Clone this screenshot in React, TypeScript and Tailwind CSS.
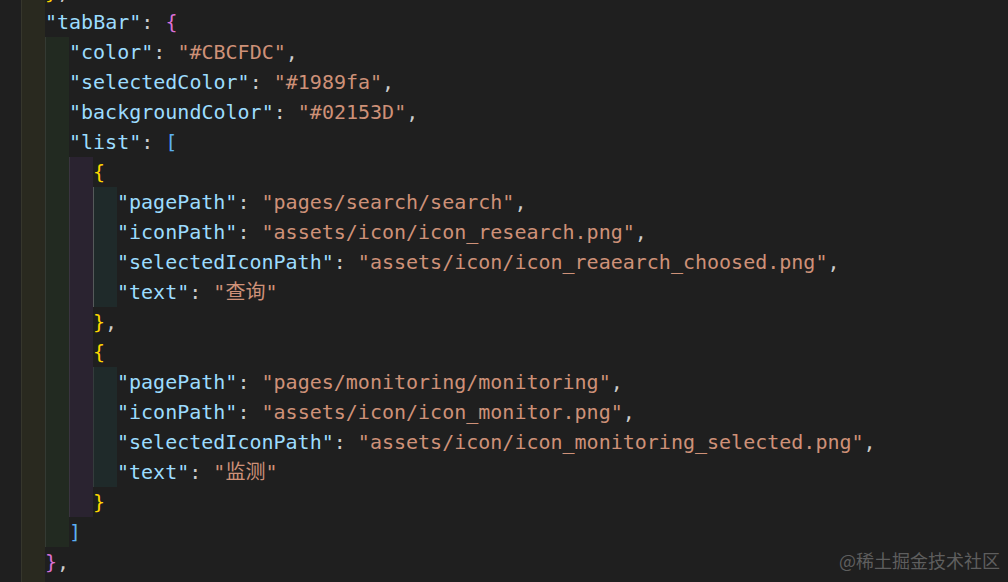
import React from 'react'

type Tok = [string, string]
type Row = { depth: number; active?: boolean; tokens: Tok[] }

const K = 'text-[#9cdcfe]'
const S = 'text-[#ce9178]'
const P = 'text-[#cccccc]'
const B1 = 'text-[#da70d6]'
const B2 = 'text-[#5cb0f2]'
const B3 = 'text-[#ffd700]'

const strips = [
  'bg-[#29291f] border-l border-[#36362c]',
  'bg-[#222a21] border-l border-[#343a33]',
  'bg-[#2a2330] border-l border-[#3a3440]',
  'bg-[#1f2a2a] border-l border-[#343c3c]',
]
const activeStrip = 'bg-[#1f2a2a] border-l border-[#555a5a]'

const kv = (key: string, val: string, comma = true): Tok[] => [
  [`"${key}"`, K],
  [': ', P],
  [`"${val}"`, S],
  ...(comma ? ([[',', P]] as Tok[]) : []),
]

const rows: Row[] = [
  { depth: 1, tokens: [['}', B3], [',', P]] },
  { depth: 1, tokens: [['"tabBar"', K], [': ', P], ['{', B1]] },
  { depth: 2, tokens: kv('color', '#CBCFDC') },
  { depth: 2, tokens: kv('selectedColor', '#1989fa') },
  { depth: 2, tokens: kv('backgroundColor', '#02153D') },
  { depth: 2, tokens: [['"list"', K], [': ', P], ['[', B2]] },
  { depth: 3, tokens: [['{', B3]] },
  { depth: 4, active: true, tokens: kv('pagePath', 'pages/search/search') },
  { depth: 4, active: true, tokens: kv('iconPath', 'assets/icon/icon_research.png') },
  { depth: 4, active: true, tokens: kv('selectedIconPath', 'assets/icon/icon_reaearch_choosed.png') },
  { depth: 4, active: true, tokens: kv('text', '查询', false) },
  { depth: 3, tokens: [['}', B3], [',', P]] },
  { depth: 3, tokens: [['{', B3]] },
  { depth: 4, tokens: kv('pagePath', 'pages/monitoring/monitoring') },
  { depth: 4, tokens: kv('iconPath', 'assets/icon/icon_monitor.png') },
  { depth: 4, tokens: kv('selectedIconPath', 'assets/icon/icon_monitoring_selected.png') },
  { depth: 4, tokens: kv('text', '监测', false) },
  { depth: 3, tokens: [['}', B3]] },
  { depth: 2, tokens: [[']', B2]] },
  { depth: 1, tokens: [['}', B1], [',', P]] },
  { depth: 1, tokens: [] },
]

function CodeLine({ row }: { row: Row }) {
  return (
    <div className="flex h-[30px] shrink-0">
      <div className="w-[21px] shrink-0" />
      {strips.slice(0, row.depth).map((cls, i) => (
        <div
          key={i}
          className={`w-[24px] shrink-0 ${i === 3 && row.active ? activeStrip : cls}`}
        />
      ))}
      <div className="whitespace-pre leading-[30px]">
        {row.tokens.map(([t, c], i) => (
          <span key={i} className={c}>
            {t}
          </span>
        ))}
      </div>
    </div>
  )
}

export default function App() {
  return (
    <div className="relative h-[582px] w-[1008px] overflow-hidden bg-[#1f1f1f]">
      <div
        className="-mt-[23px] flex flex-col text-[20px]"
        style={{ fontFamily: '"DejaVu Sans Mono", "Noto Sans CJK SC", monospace' }}
      >
        {rows.map((r, i) => (
          <CodeLine key={i} row={r} />
        ))}
      </div>
      <div
        className="absolute bottom-[8px] right-[8px] text-[18px] text-[#5e5e5e]"
        style={{ fontFamily: '"Noto Sans CJK SC", "Noto Sans", sans-serif' }}
      >
        @稀土掘金技术社区
      </div>
    </div>
  )
}
